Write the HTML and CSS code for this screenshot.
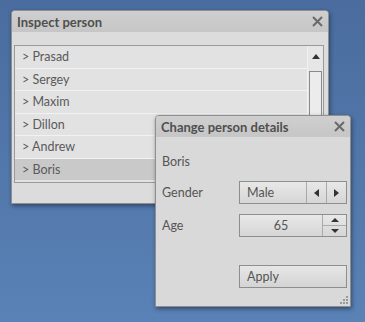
FILE: index.html
```html
<!DOCTYPE html>
<html lang="en">
<head>
  <meta charset="UTF-8" />
  <title>Inspect person</title>
  <link rel="stylesheet" href="styles.css">
</head>
<body>

  <!-- list window -->
  <div class="window" id="inspectWin">
    <div class="titlebar">
      <span class="title">Inspect person</span>
      <svg class="close" width="11" height="11" viewBox="0 0 11 11"><path d="M1 1L10 10M10 1L1 10"/></svg>
    </div>
    <div class="win-body">
      <div class="listbox">
        <ul class="rows">
          <li>&gt; Prasad</li>
          <li>&gt; Sergey</li>
          <li>&gt; Maxim</li>
          <li>&gt; Dillon</li>
          <li>&gt; Andrew</li>
          <li class="selected">&gt; Boris</li>
        </ul>
        <div class="scrollbar">
          <div class="arrow-up"></div>
          <div class="thumb"></div>
        </div>
      </div>
    </div>
  </div>

  <!-- details window -->
  <div class="window" id="detailsWin">
    <div class="titlebar">
      <span class="title">Change person details</span>
      <svg class="close" width="11" height="11" viewBox="0 0 11 11"><path d="M1 1L10 10M10 1L1 10"/></svg>
    </div>
    <div class="form">
      <div class="name">Boris</div>
      <div class="field">
        <label>Gender</label>
        <div class="spin">
          <span class="value">Male</span>
          <span class="btn"><i class="tri-left"></i></span>
          <span class="btn"><i class="tri-right"></i></span>
        </div>
      </div>
      <div class="field">
        <label>Age</label>
        <div class="spin">
          <span class="value center">65</span>
          <span class="updown">
            <span class="half"><i class="tri-up"></i></span>
            <span class="half"><i class="tri-down"></i></span>
          </span>
        </div>
      </div>
      <div class="field apply-row">
        <label></label>
        <button class="apply">Apply</button>
      </div>
    </div>
    <div class="grip">
      <i></i><i></i><i></i>
    </div>
  </div>

</body>
</html>
```

FILE: styles.css
```css
html, body {
  margin: 0;
  padding: 0;
  height: 100%;
}

body {
  font-family: Lato, 'Open Sans', sans-serif;
  font-size: 12.5px;
  color: #555;
  background: linear-gradient(to bottom, #4a6c9e, #5a82b6);
  position: relative;
  overflow: hidden;
}

.window {
  position: absolute;
  background: #d9d9d9;
  border: 1px solid #8f8f8f;
  border-radius: 4px 4px 1px 1px;
  box-shadow: 1px 2px 4px rgba(20, 30, 50, 0.55);
  display: flex;
  flex-direction: column;
}

#inspectWin {
  left: 11px;
  top: 10px;
  width: 316px;
  height: 192px;
}

#detailsWin {
  left: 155px;
  top: 115px;
  width: 194px;
  height: 190px;
}

.titlebar {
  height: 21px;
  display: flex;
  align-items: center;
  justify-content: space-between;
  padding: 0 5px 0 5px;
  background: linear-gradient(to bottom, #cfcfcf, #c6c6c6);
  border-radius: 3px 3px 0 0;
  flex-shrink: 0;
}

.title {
  font-weight: bold;
  font-size: 13px;
  color: #4f4f4f;
}

.close {
  stroke: #6a6a6a;
  stroke-width: 2;
  fill: none;
}

.win-body {
  flex: 1;
  padding: 13px 4px 20px 2px;
  background: #dcdcdc;
}

.listbox {
  display: flex;
  height: 136px;
  border: 1px solid #9a9a9a;
  background: #e2e2e2;
}

.rows {
  list-style: none;
  margin: 0;
  padding: 0;
  flex: 1;
}

.rows li {
  height: 21.5px;
  line-height: 21px;
  padding-left: 7px;
  border-bottom: 1px solid #f2f2f2;
  color: #5a5a5a;
}

.rows li.selected {
  background: #c9c9c9;
  border-bottom: none;
}

.scrollbar {
  width: 15px;
  border-left: 1px solid #f2f2f2;
  background: #e6e6e6;
  display: flex;
  flex-direction: column;
  align-items: center;
}

.arrow-up {
  margin-top: 8px;
  width: 0;
  height: 0;
  border-left: 4px solid transparent;
  border-right: 4px solid transparent;
  border-bottom: 5px solid #333;
}

.thumb {
  margin-top: 12px;
  width: 11px;
  flex: 1;
  border: 1px solid #8a8a8a;
  border-bottom: none;
  background: #ececec;
}

.form {
  flex: 1;
  padding: 14px 3px 0 6px;
  display: flex;
  flex-direction: column;
}

.name {
  height: 22px;
  line-height: 22px;
  margin-bottom: 8px;
}

.field {
  display: flex;
  align-items: center;
  margin-bottom: 10px;
}

.field label {
  width: 77px;
}

.spin {
  width: 106px;
  height: 21px;
  display: flex;
  border: 1px solid #8e8e8e;
  background: linear-gradient(to bottom, #e8e8e8, #d6d6d6);
}

.spin .value {
  flex: 1;
  padding-left: 7px;
  line-height: 21px;
}

.spin .value.center {
  text-align: center;
  padding-left: 0;
}

.btn {
  width: 19px;
  border-left: 1px solid #aaa;
  display: flex;
  align-items: center;
  justify-content: center;
}

.tri-left, .tri-right, .tri-up, .tri-down {
  width: 0;
  height: 0;
  display: block;
}

.tri-left {
  border-top: 4px solid transparent;
  border-bottom: 4px solid transparent;
  border-right: 5px solid #333;
}

.tri-right {
  border-top: 4px solid transparent;
  border-bottom: 4px solid transparent;
  border-left: 5px solid #333;
}

.tri-up {
  border-left: 4px solid transparent;
  border-right: 4px solid transparent;
  border-bottom: 4px solid #333;
}

.tri-down {
  border-left: 4px solid transparent;
  border-right: 4px solid transparent;
  border-top: 4px solid #333;
}

.updown {
  width: 23px;
  border-left: 1px solid #aaa;
  display: flex;
  flex-direction: column;
}

.half {
  flex: 1;
  display: flex;
  align-items: center;
  justify-content: center;
}

.half + .half {
  border-top: 1px solid #aaa;
}

.apply-row {
  margin-top: 18px;
}

.apply {
  width: 108px;
  height: 23px;
  border: 1px solid #8e8e8e;
  border-radius: 0;
  background: linear-gradient(to bottom, #e6e6e6, #d4d4d4);
  font-family: Lato, 'Open Sans', sans-serif;
  font-size: 12.5px;
  color: #555;
  text-align: left;
  padding-left: 7px;
}

.grip {
  position: absolute;
  right: 2px;
  bottom: 2px;
  width: 9px;
  height: 9px;
}

.grip i {
  position: absolute;
  width: 2px;
  height: 2px;
  background: #999;
}

.grip i:nth-child(1) { right: 0; bottom: 0; box-shadow: 0 -3px #999, 0 -6px #999; }
.grip i:nth-child(2) { right: 3px; bottom: 0; box-shadow: 0 -3px #999; }
.grip i:nth-child(3) { right: 6px; bottom: 0; }
```
